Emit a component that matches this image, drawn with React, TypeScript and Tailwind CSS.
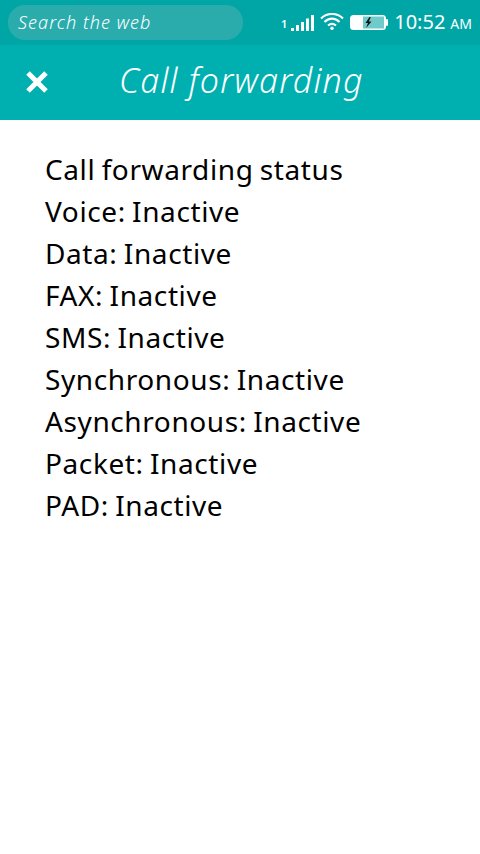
export default function App() {
  const lines = [
    'Call forwarding status',
    'Voice: Inactive',
    'Data: Inactive',
    'FAX: Inactive',
    'SMS: Inactive',
    'Synchronous: Inactive',
    'Asynchronous: Inactive',
    'Packet: Inactive',
    'PAD: Inactive',
  ];

  return (
    <div className="min-h-[854px] bg-white font-['Noto_Sans',sans-serif]">
      {/* status bar */}
      <div className="h-[45px] bg-[#00a6a6] flex items-center pl-2 pr-[8px]">
        <div className="w-[235px] h-[35px] rounded-[17px] bg-[#2bacac] flex items-center pl-2.5 text-[18px] italic font-light text-white tracking-[1.050px]">
          Search the web
        </div>
        <div className="flex-1 flex items-center justify-end text-white">
          <span className="text-[11px] font-semibold mr-[4px] mt-1">1</span>
          <svg width="23" height="16" viewBox="0 0 23 16" fill="#fff" className="mr-[6px] mt-[1px]">
            <rect x="0" y="13" width="3" height="3" />
            <rect x="5" y="10" width="3" height="6" />
            <rect x="10" y="7" width="3" height="9" />
            <rect x="15" y="3.500" width="3" height="12.500" />
            <rect x="20" y="0" width="3" height="16" />
          </svg>
          <svg width="24" height="17" viewBox="0 0 24 17" fill="none" stroke="#fff" strokeWidth="2.200" className="mr-[6px] -mt-[2px]">
            <path d="M1 5.500 C7 -0.500 17 -0.500 23 5.500" />
            <path d="M4.500 9 C9 4.500 15 4.500 19.500 9" />
            <path d="M8 12.500 C10.500 10.500 13.500 10.500 16 12.500" />
            <circle cx="12" cy="15.200" r="1.700" fill="#fff" stroke="none" />
          </svg>
          <svg width="38" height="15" viewBox="0 0 38 15" className="mr-[6px] -mt-[1px]">
            <rect x="0" y="0" width="36" height="15" rx="3.500" fill="#fff" />
            <rect x="13" y="1.500" width="21" height="12" fill="#6fcaca" />
            <rect x="36" y="4" width="2" height="7" rx="1" fill="#fff" />
            <path d="M19.500 2 L15.500 8 L18 8 L16 13 L21.500 6.500 L18.800 6.500 L20.800 2 Z" fill="#111" />
          </svg>
          <span className="text-[20px] leading-none -mt-[2px]">10:52</span>
          <span className="text-[14px] ml-[5px] mt-[1px]">AM</span>
        </div>
      </div>

      {/* header */}
      <div className="h-[75px] bg-[#00b0b0] flex items-center">
        <svg width="24" height="24" viewBox="0 0 24 24" className="ml-[25px] -mt-[1px]" stroke="#fff" strokeWidth="5" fill="none">
          <path d="M3 3 L21 21 M21 3 L3 21" />
        </svg>
        <h1 className="ml-[70px] -mt-[4px] text-[34px] italic font-light text-white tracking-[1.2px]">Call forwarding</h1>
      </div>

      {/* status text */}
      <div className="pt-[28px] pl-[45px] text-[28px] leading-[42px] tracking-[0.6px] [word-spacing:-1.500px] text-black">
        {lines.map((line) => (
          <div key={line}>{line}</div>
        ))}
      </div>
    </div>
  );
}
